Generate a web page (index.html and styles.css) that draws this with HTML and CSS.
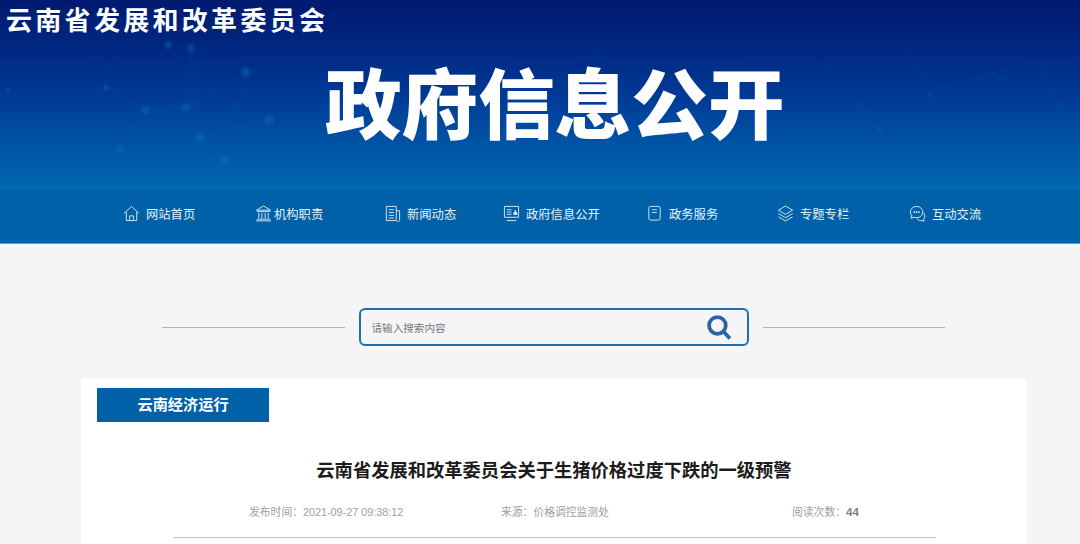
FILE: index.html
```html
<!DOCTYPE html>
<html>
<head>
  <meta charset="utf-8">
  <title>政府信息公开</title>
  <link rel="stylesheet" href="styles.css">
</head>

<body>
  <header class="banner">
    <svg class="stars" viewBox="0 0 1080 190" aria-hidden="true">
      <g class="star-lines">
        <path d="M120 149L146 110L186 107L246 72M186 107L200 138L225 160M200 138L269 120M146 110L106 88L108 60M186 107L191 48L168 45M246 72L225 160M191 48L200 138"/>
        <path d="M600 40L580 100M900 30L930 90L1010 70M1040 60L1060 110M820 60L880 130"/>
      </g>
      <g class="star-dots">
        <circle cx="146" cy="110" r="4"/>
        <circle cx="186" cy="107" r="4"/>
        <circle cx="120" cy="149" r="4"/>
        <circle cx="200" cy="138" r="5"/>
        <circle cx="225" cy="160" r="4"/>
        <circle cx="246" cy="72" r="5"/>
        <circle cx="269" cy="120" r="5"/>
        <circle cx="191" cy="48" r="4"/>
        <circle cx="168" cy="45" r="4"/>
        <circle cx="106" cy="88" r="3"/>
        <circle cx="8" cy="90" r="2"/>
        <circle cx="930" cy="95" r="2"/>
        <circle cx="1000" cy="80" r="2"/>
        <circle cx="880" cy="130" r="2"/>
      </g>
    </svg>
    <div class="org">云南省发展和改革委员会</div>
    <h1 class="headline">政府信息公开</h1>
  </header>

  <nav class="nav">
    <a class="nav-item nav-home" href="#">
      <svg viewBox="0 0 18 18"><path d="M1 9L9 1.500L17 9M3.500 7.500V16.500H14.500V7.500M7 16.500V11.500H11V16.500"/></svg>
      <span>网站首页</span>
    </a>
    <a class="nav-item nav-org" href="#">
      <svg viewBox="0 0 18 18"><path d="M1.500 5.500L9 1L16.500 5.500ZM2 7H16M4 8.500V14M7.300 8.500V14M10.700 8.500V14M14 8.500V14M2 15H16M1 16.800H17"/></svg>
      <span>机构职责</span>
    </a>
    <a class="nav-item nav-news" href="#">
      <svg viewBox="0 0 18 18"><path d="M13 16.500H2.500V1.500H13ZM13 6H16.500V15A1.500 1.500 0 0 1 13 16.500M5 5H10.500M5 8H10.500M5 11H10.500M5 13.800H10.500"/></svg>
      <span>新闻动态</span>
    </a>
    <a class="nav-item nav-info" href="#">
      <svg viewBox="0 0 18 18"><path d="M1.500 1.500H16.500V13H1.500ZM4 16.500H14M4 5H9M4 7.500H9M4 10H9"/><path class="fill" d="M11 10.500L11 8L13 7L15 8V10.500ZM12 5.500H14V7H12Z"/></svg>
      <span>政府信息公开</span>
    </a>
    <a class="nav-item nav-serve" href="#">
      <svg viewBox="0 0 18 18"><rect x="3" y="1.500" width="12" height="14.500" rx="2"/><path d="M6.500 5H11.500M6.500 8H11.500"/></svg>
      <span>政务服务</span>
    </a>
    <a class="nav-item nav-topic" href="#">
      <svg viewBox="0 0 18 18"><path d="M9 1L16.500 5.500L9 10L1.500 5.500ZM1.500 9L9 13.500L16.500 9M1.500 12.500L9 17L16.500 12.500"/></svg>
      <span>专题专栏</span>
    </a>
    <a class="nav-item nav-talk" href="#">
      <svg viewBox="0 0 18 18"><path d="M8 1.500A6.500 6 0 0 0 3 11.500L2 14L5.500 13A6.500 6 0 1 0 8 1.500ZM15.500 8.500C17.500 11 17 14 15.500 15L16 17L12 16.500C10.500 16.500 9.500 15.500 8.500 14.500"/><path class="dots" d="M5.500 7.500H5.600M8 7.500H8.100M10.500 7.500H10.600"/></svg>
      <span>互动交流</span>
    </a>
  </nav>

  <section class="search-row">
    <div class="rule"></div>
    <div class="search">
      <span class="search-hint">请输入搜索内容</span>
      <svg class="search-icon" viewBox="0 0 24 24"><circle cx="10" cy="10" r="8"/><path d="M16 16L22 22.500"/></svg>
    </div>
    <div class="rule"></div>
  </section>

  <main class="card">
    <div class="tag">云南经济运行</div>
    <h2 class="title">云南省发展和改革委员会关于生猪价格过度下跌的一级预警</h2>
    <div class="meta">
      <span class="meta-date">发布时间：2021-09-27 09:38:12</span>
      <span class="meta-source">来源：价格调控监测处</span>
      <span class="meta-views">阅读次数：<b>44</b></span>
    </div>
  </main>
</body>

</html>
```

FILE: styles.css
```css
* {
  box-sizing: border-box;
}

html, body {
  height: 544px;
  overflow: hidden;
}

body {
  margin: 0;
  background: #f5f5f7;
  font-family: "Liberation Sans", "Noto Sans CJK SC", sans-serif;
}

/* banner */
.banner {
  position: relative;
  height: 190px;
  padding: 4px 0 0 6px;
  background: linear-gradient(180deg, #001a70 0%, #00277f 25%, #003a96 50%, #0053a5 75%, #0069b0 100%);
  overflow: hidden;
}

.stars {
  position: absolute;
  left: 0;
  top: 0;
  width: 1080px;
  height: 190px;
  filter: blur(1px);
}

.star-lines path {
  fill: none;
  stroke: #2a74c0;
  stroke-width: 1;
  opacity: .14;
}

.star-dots circle {
  fill: #0a7fc4;
  opacity: .3;
}

.org {
  position: relative;
  font-size: 26px;
  font-weight: 700;
  line-height: 34px;
  letter-spacing: 3.300px;
  color: #fff;
}

.headline {
  position: relative;
  margin: 19px 0 0 319px;
  font-size: 76.600px;
  font-weight: 900;
  line-height: 100px;
  white-space: nowrap;
  color: #fff;
}

/* nav */
.nav {
  display: flex;
  height: 54px;
  padding: 0 0 6px 123px;
  background: #0061a8;
  border-bottom: 1px solid #5aa0d0;
  align-items: center;
}

.nav-item {
  display: flex;
  align-items: center;
  font-size: 12.300px;
  color: #e6f0f8;
  text-decoration: none;
  white-space: nowrap;
}

.nav-item svg {
  width: 17px;
  height: 17px;
  margin-right: 6px;
  fill: none;
  stroke: #dce9f4;
  stroke-width: 1;
}

.nav-item svg .fill {
  fill: #dce9f4;
  stroke: none;
}

.nav-item svg .dots {
  stroke-width: 2;
  stroke-linecap: round;
}

.nav-home { width: 132px; }
.nav-org { width: 129px; }
.nav-org svg { margin-right: 2px; }
.nav-news { width: 119px; }
.nav-info { width: 143px; }
.nav-serve { width: 131px; }
.nav-topic { width: 132px; }

/* search */
.search-row {
  display: flex;
  align-items: center;
  gap: 14px;
  height: 135px;
  padding: 31px 135px 0 162px;
}

.rule {
  flex: 1;
  height: 1px;
  background: #b4b4b8;
}

.search {
  display: flex;
  align-items: center;
  justify-content: space-between;
  width: 390px;
  height: 38px;
  padding: 1px 15px 0 11px;
  border: 2px solid #1f6fb0;
  border-radius: 6px;
}

.search-hint {
  font-size: 10.600px;
  color: #777;
}

.search-icon {
  width: 25px;
  height: 25px;
  fill: none;
  stroke: #2a64a8;
  stroke-width: 3.600;
}

/* article card */
.card {
  width: 946px;
  height: 165px;
  margin-left: 81px;
  padding-top: 9px;
  background: #fff;
}

.tag {
  width: 172px;
  height: 34px;
  margin-left: 16px;
  background: #0061a8;
  color: #fff;
  font-size: 15.200px;
  font-weight: 700;
  line-height: 34px;
  text-align: center;
}

.title {
  margin: 36px 0 0;
  font-size: 18.300px;
  font-weight: 700;
  line-height: 26px;
  color: #1c1c1c;
  text-align: center;
}

.meta {
  display: flex;
  height: 35px;
  margin: 19px 91px 0 92px;
  padding: 0 76px;
  border-bottom: 1px solid #c8c8c8;
  font-size: 10.800px;
  line-height: 18px;
  color: #a0a0a0;
}

.meta-date { width: 252px; }
.meta-source { width: 291px; }

.meta-views b {
  font-size: 11.500px;
  color: #808080;
}
```
